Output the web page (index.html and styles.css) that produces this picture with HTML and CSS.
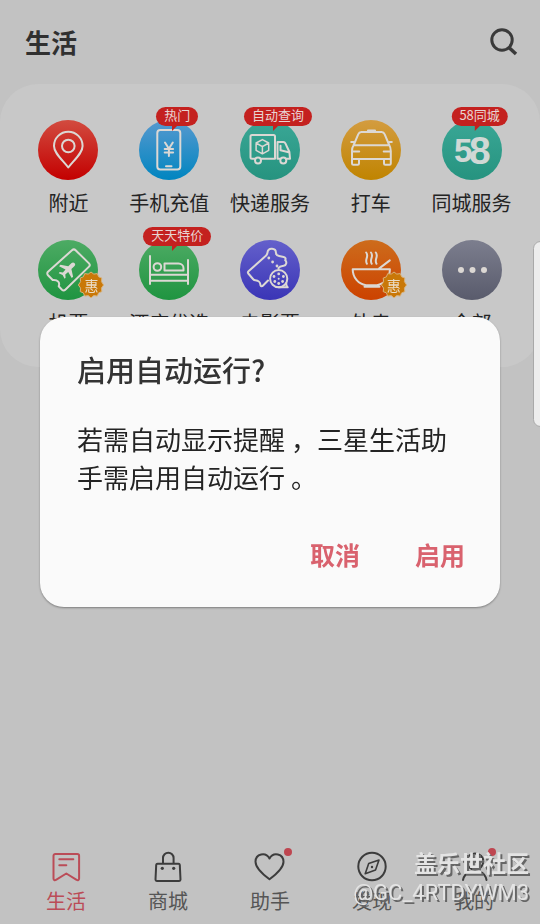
FILE: index.html
```html
<!DOCTYPE html>
<html lang="zh-CN">
<head>
<meta charset="utf-8">
<meta name="viewport" content="width=device-width, initial-scale=1">
<title>生活</title>
<link rel="stylesheet" href="styles.css">
</head>
<body>
<div class="app">
  <header class="header">
    <h1 class="header-title">生活</h1>
    <button class="search" type="button" aria-label="搜索">
      <svg width="30" height="30" viewBox="0 0 30 30" fill="none" stroke="#3a3a3a" stroke-width="3"><circle cx="13" cy="13" r="10.2"/><path d="M20 20.500l7 6.500" stroke-width="3.400"/></svg>
    </button>
  </header>

  <main class="panel">
    <a class="service" href="#">
      <span class="disc red">
        <svg class="glyph" viewBox="0 0 60 60"><path d="M30.300 47.500C24 39.500 16 33 16 26a14.300 14.300 0 0 1 28.600 0c0 7-8 13.500-14.300 21.500z"/><circle cx="30.300" cy="26" r="6.300"/></svg>
      </span>
      <span class="label">附近</span>
    </a>
    <a class="service" href="#">
      <span class="disc blue">
        <svg class="glyph" viewBox="0 0 60 60"><rect x="18.300" y="10" width="23" height="39.500" rx="3"/><path d="M27 46.300h5.500"/><path d="M26 22.500l3.900 6.200 3.900-6.200M29.900 28.700V36M25.700 29h8.400M25.700 32.600h8.400"/></svg>
        <span class="bubble">热门</span>
      </span>
      <span class="label">手机充值</span>
    </a>
    <a class="service" href="#">
      <span class="disc teal">
        <svg class="glyph" viewBox="0 0 60 60"><path d="M14.500 38.700H12a1.500 1.500 0 0 1-1.500-1.500V16.500A1.500 1.500 0 0 1 12 15h21.500a1.500 1.500 0 0 1 1.500 1.500v22.200H21.500M39.800 38.700h-2.300V22h5.800c1 0 1.700.5 2.100 1.400l4 8.600.6 6.700h-3.200M40.500 25.800v4.400l8.200 2"/><circle cx="18" cy="40.500" r="3"/><circle cx="43.300" cy="40.500" r="3"/><path d="M22.400 19.600l6.300 3.400v7.300l-6.300 3.500-6.300-3.500V23zM16.100 23l6.300 3.600 6.300-3.600M22.400 26.600v7.200" stroke-width="1.500"/></svg>
        <span class="bubble">自动查询</span>
      </span>
      <span class="label">快递服务</span>
    </a>
    <a class="service" href="#">
      <span class="disc amber">
        <svg class="glyph" viewBox="0 0 60 60"><path d="M27 12v-1.500h7V12M12.500 25.300h35.800M12.700 25l4.600-10.800c.6-1.500 1.500-2.200 3-2.200h20.300c1.500 0 2.400.7 3 2.200l4.600 10.800M12.700 25c-1.200 1.800-1.700 3.500-1.700 6v12.500c0 .8.500 1.300 1.300 1.300h4.400c.8 0 1.300-.5 1.300-1.300V39h25v4.500c0 .8.500 1.300 1.300 1.300h4.200c.8 0 1.300-.5 1.300-1.300V31c0-2.500-.4-4.200-1.600-6M11.200 31.500h7M42.700 31.500h7M11.200 38.900h38.400M10.200 22h2.400M48.500 22h2.300"/></svg>
      </span>
      <span class="label">打车</span>
    </a>
    <a class="service" href="#">
      <span class="disc teal">
        <svg class="digits" viewBox="0 0 60 60"><text x="12" y="42" font-size="33">5</text><text x="27" y="44" font-size="39">8</text></svg>
        <span class="bubble">58同城</span>
      </span>
      <span class="label">同城服务</span>
    </a>
    <a class="service" href="#">
      <span class="disc green">
        <svg class="glyph" viewBox="0 0 60 60"><path d="M10 31.800L34 10.200c1.200-1.100 2.500-1.100 3.600 0L51 23.400c1 1 1 2.200 0 3.200L27.300 49.700c-1 1-2.300 1-3.300 0l-3.300-3.500c1.400-3.200-.6-6.700-6-6.200L10 35.200c-1-1-1-2.400 0-3.400z"/><path class="solid" d="M36.600 23.200c1 .8.600 2.100-.3 3l-2.900 2.900 1.700 7.700-1.400 1.300-3.500-6.200-2.900 2.700.3 3.200-1 1-2-3.800-3.900-1.800 1-1.100 3.200.3 2.600-2.900-6.400-3.200 1.300-1.500 7.900 1.400 3-3c1-.9 2.400-1 3.300 0z"/></svg>
        <span class="seal"><svg viewBox="0 0 28 28"><path d="M14 1l2.800 2.100 3.500-.5 1.300 3.200 3.200 1.300-.4 3.500L26.600 14l-2.200 3.100.4 3.500-3.200 1.300-1.300 3.200-3.500-.5L14 26.900l-2.800-2.300-3.500.5-1.300-3.200-3.200-1.300.4-3.500L1.400 14l2.200-3.400-.4-3.500 3.200-1.300 1.300-3.200 3.500.5z"/></svg><span>惠</span></span>
      </span>
      <span class="label">机票</span>
    </a>
    <a class="service" href="#">
      <span class="disc green">
        <svg class="glyph" viewBox="0 0 60 60"><path d="M11 16v28M49 20v24M11 34.800h38M11 40.700h38"/><circle cx="18.400" cy="27" r="3.800"/><path d="M25.500 23.600h14c3 0 5 2 5 4.600v2.300h-19z"/></svg>
        <span class="bubble">天天特价</span>
      </span>
      <span class="label">酒店优选</span>
    </a>
    <a class="service" href="#">
      <span class="disc indigo">
        <svg class="glyph" viewBox="0 0 60 60"><path d="M28 40.500l-5.200 5.300c-.8.800-1.700.7-2.200-.3-.5-3.500-1.500-5-5.300-5.300-1 0-1.700-.5-2.300-1.200l-4.700-5.500c-.6-.8-.6-1.500.2-2.200L24.500 17c2.300-1.600 2.900-2.300 3-4.500.8-5.500 8.400-4.200 8.400 0 0 2.200 1.200 3.200 3.200 3.500l4.600 1c1.900.5 2.300 1.800 1.500 3.200 2 1.600 1.200 5.200-1.500 5.600-2.400.4-3.700.2-5.200 2.300"/><circle cx="38.700" cy="38.700" r="8.600"/><path d="M38.700 47.300h9M46.300 43c-.3 2 .2 3.400 1.400 4.300"/><g class="solid"><circle cx="28.800" cy="18" r="1.400"/><circle cx="32.600" cy="22" r="1.400"/><circle cx="37" cy="26" r="1.400"/><circle cx="38.700" cy="33.900" r="1.400"/><circle cx="38.700" cy="43.500" r="1.400"/><circle cx="38.700" cy="38.700" r="1"/><circle cx="34" cy="36.500" r="1.400"/><circle cx="43.400" cy="36.500" r="1.400"/><circle cx="34.800" cy="41.500" r="1.400"/><circle cx="42.600" cy="41.500" r="1.400"/></g></svg>
      </span>
      <span class="label">电影票</span>
    </a>
    <a class="service" href="#">
      <span class="disc orange">
        <svg class="glyph" viewBox="0 0 60 60"><path d="M11.700 29.300h37.200c0 8.200-5.700 14.900-13 15.900H25c-7.600-1-13.300-7.700-13.300-15.900zM23.500 46.800h15M38 28.600l10.800-8.200"/><path d="M25.200 12.500c3.200 4-2 7 .7 11.200M30 12.500c3.200 4-2 7 .7 11.200M34.800 12.500c3.200 4-2 7 .7 11.200"/></svg>
        <span class="seal"><svg viewBox="0 0 28 28"><path d="M14 1l2.800 2.100 3.500-.5 1.300 3.200 3.200 1.300-.4 3.500L26.600 14l-2.200 3.100.4 3.500-3.200 1.300-1.300 3.200-3.500-.5L14 26.900l-2.800-2.300-3.500.5-1.300-3.200-3.200-1.300.4-3.500L1.400 14l2.200-3.400-.4-3.500 3.200-1.300 1.300-3.200 3.500.5z"/></svg><span>惠</span></span>
      </span>
      <span class="label">外卖</span>
    </a>
    <a class="service" href="#">
      <span class="disc slate">
        <svg class="glyph" viewBox="0 0 60 60"><g class="solid"><circle cx="19" cy="30" r="3"/><circle cx="30.500" cy="30" r="3"/><circle cx="42" cy="30" r="3"/></g></svg>
      </span>
      <span class="label">全部</span>
    </a>
  </main>

  <nav class="tabs">
    <a class="tab active" href="#">
      <svg viewBox="0 0 34 34"><path d="M6.300 4h22a1.800 1.800 0 0 1 1.800 1.800v22.700c0 1.600-1.300 2.200-2.500 1.300L17.300 23.500 7 29.800c-1.200.9-2.500.3-2.500-1.300V5.800A1.800 1.800 0 0 1 6.300 4zM10.300 9.300h14M10.300 15.300h7"/></svg>
      <span>生活</span>
    </a>
    <a class="tab" href="#">
      <svg viewBox="0 0 34 34"><path d="M6.500 13.700h21c.7 0 1.200.4 1.300 1.200l.7 14.600c0 .9-.4 1.400-1.300 1.400H5.800c-.9 0-1.300-.5-1.300-1.400l.7-14.600c.1-.8.600-1.200 1.300-1.200zM12 13.500V8a5.300 5.300 0 0 1 10.600 0v5.500"/><circle class="fill" cx="11.300" cy="18.300" r="1.600"/><circle class="fill" cx="22.700" cy="18.300" r="1.600"/></svg>
      <span>商城</span>
    </a>
    <a class="tab dot" href="#">
      <svg viewBox="0 0 34 34"><path d="M16.500 29.300C10 24.500 2.500 18.500 2.500 11.800c0-8.300 10.300-10.300 14-3.300 3.700-7 14-5 14 3.300 0 6.700-7.500 12.700-14 17.500z"/></svg>
      <span>助手</span>
    </a>
    <a class="tab" href="#">
      <svg viewBox="0 0 34 34"><circle cx="17" cy="16.500" r="13.700"/><path d="M24 10l-3.500 10-10.300 3.700L13.700 13.500z" stroke-width="1.600"/><circle class="fill" cx="17" cy="17" r="1.200"/></svg>
      <span>发现</span>
    </a>
    <a class="tab dot" href="#">
      <svg viewBox="0 0 34 34"><path d="M18 3.500c-5 0-8.300 3.500-8.300 8s3.600 8 8.300 8 8.300-3.500 8.300-8-3.300-8-8.300-8zM6 30c.8-4 3-6.800 6.800-8.300M29.500 30c-.8-4-3-6.800-6.300-8.300"/></svg>
      <span>我的</span>
    </a>
  </nav>
</div>

<div class="edge-handle"></div>

<div class="overlay">
  <section class="dialog" role="dialog" aria-labelledby="dialog-title">
    <h2 id="dialog-title" class="dialog-title">启用自动运行?</h2>
    <p class="dialog-text">若需自动显示提醒<span class="mark">，</span>三星生活助手需启用自动运行<span class="mark">。</span></p>
    <div class="dialog-actions">
      <button type="button">取消</button>
      <button type="button">启用</button>
    </div>
  </section>
</div>

<div class="watermark"><div class="community">盖乐世社区</div><div class="author">@GC_4RTDYWM3</div></div>
</body>
</html>
```
FILE: styles.css
```css
* { box-sizing: border-box; }

body {
  margin: 0;
  background: #c2c2c2;
  color: #242424;
  font-family: "Noto Sans CJK SC", "Noto Sans", sans-serif;
}

a { color: inherit; text-decoration: none; }

button {
  padding: 0;
  border: 0;
  background: none;
  font: inherit;
  color: inherit;
}

.app {
  display: flex;
  flex-direction: column;
  min-height: 100vh;
}

.header {
  display: flex;
  align-items: center;
  justify-content: space-between;
  height: 84px;
  padding: 0 21px 0 25px;
}

.header-title {
  margin: 0;
  font-size: 26px;
  line-height: 40px;
  font-weight: 700;
  color: #303030;
}

.search { display: flex; }

.panel {
  display: grid;
  grid-template-columns: repeat(5, 1fr);
  row-gap: 22px;
  padding: 36px 18px 29px;
  border-radius: 38px;
  background: #c8c8c8;
}

.service {
  display: flex;
  flex-direction: column;
  align-items: center;
  gap: 8px;
}

.label {
  font-size: 20px;
  line-height: 30px;
  white-space: nowrap;
}

.disc {
  position: relative;
  width: 60px;
  height: 60px;
  border-radius: 50%;
}

.disc > svg { display: block; width: 60px; height: 60px; }

.red { background: linear-gradient(#d24b3f, #c30000); }
.blue { background: linear-gradient(#5799cf, #0085c0); }
.teal { background: linear-gradient(#3aa796, #26937f); }
.amber { background: linear-gradient(#d39c40, #c08400); }
.green { background: linear-gradient(#4dab64, #1f9440); }
.indigo { background: linear-gradient(#6460cb, #3a35b6); }
.orange { background: linear-gradient(#cd6c1c, #cc4200); }
.slate { background: linear-gradient(#7c7e8e, #595b6c); }

.glyph {
  fill: none;
  stroke: #dcd8d4;
  stroke-width: 2;
  stroke-linecap: round;
  stroke-linejoin: round;
}

.glyph .solid { fill: #dcd8d4; stroke-width: 0; }

.digits {
  fill: #d0d8d5;
  font-family: "Liberation Sans", sans-serif;
  font-weight: 700;
}

.bubble {
  position: absolute;
  top: -13px;
  left: 38px;
  transform: translateX(-50%);
  padding: 0 8px 3px;
  border-radius: 10px;
  background: #c4211f;
  color: #e8d4d2;
  font-size: 13px;
  line-height: 16px;
  white-space: nowrap;
}

.bubble::after {
  content: "";
  position: absolute;
  top: 18px;
  left: 50%;
  margin-left: -5px;
  border-top: 6px solid #c4211f;
  border-right: 6px solid transparent;
}

.seal {
  position: absolute;
  left: 39px;
  top: 31px;
  display: grid;
  width: 28px;
  height: 28px;
  color: #eadcc6;
  font-size: 14px;
  line-height: 28px;
  text-align: center;
}

.seal > * { grid-area: 1 / 1; }

.seal svg { width: 28px; height: 28px; fill: #c97808; stroke: #d8b27c; stroke-width: 1; stroke-linejoin: round; }

.seal span { z-index: 1; }

.tabs {
  display: grid;
  grid-template-columns: repeat(5, 1fr);
  margin-top: auto;
  padding: 0 15px 8px;
}

.tab {
  position: relative;
  display: flex;
  flex-direction: column;
  align-items: center;
  gap: 2px;
  font-size: 20px;
  line-height: 30px;
  color: #555;
}

.tab svg {
  width: 34px;
  height: 34px;
  fill: none;
  stroke: #3c3c3c;
  stroke-width: 2;
  stroke-linecap: round;
  stroke-linejoin: round;
}

.tab .fill { fill: #3c3c3c; stroke: none; }

.active { color: #bb4c57; }
.active svg { stroke: #bb4c57; }

.dot::after {
  content: "";
  position: absolute;
  top: -2px;
  left: 50%;
  margin-left: 14px;
  width: 8px;
  height: 8px;
  border-radius: 50%;
  background: #be4650;
}

.edge-handle {
  position: fixed;
  top: 241px;
  right: -8px;
  width: 15px;
  height: 186px;
  border: 1px solid #a9a9a9;
  border-radius: 8px;
  background: #ededed;
}

.overlay {
  position: fixed;
  inset: 0;
  display: flex;
  align-items: center;
  padding: 0 40px;
}

.dialog {
  width: 100%;
  padding: 31px 35px 33px 37px;
  border-radius: 24px;
  background: #fafafa;
  box-shadow: 0 1px 2px rgba(0, 0, 0, 0.35);
}

.dialog-title {
  margin: 0 0 30px;
  font-size: 29px;
  line-height: 42px;
  font-weight: 500;
  color: #333;
}

.dialog-text {
  margin: 0 0 38px;
  font-size: 26px;
  line-height: 38px;
  color: #242424;
}

.mark { padding-left: 6px; }

.dialog-actions {
  display: flex;
  justify-content: flex-end;
  gap: 55px;
}

.dialog-actions button {
  font-size: 25px;
  line-height: 40px;
  font-weight: 700;
  color: #d9626e;
}

.watermark {
  position: fixed;
  right: 11px;
  bottom: 16px;
  text-align: right;
  color: #e4e4e4;
  text-shadow: 2px 2px 0 #666;
  pointer-events: none;
}

.community {
  font-size: 23px;
  line-height: 32px;
  font-weight: 700;
}

.author {
  font-family: Roboto, sans-serif;
  font-size: 22px;
  line-height: 30px;
}
```
